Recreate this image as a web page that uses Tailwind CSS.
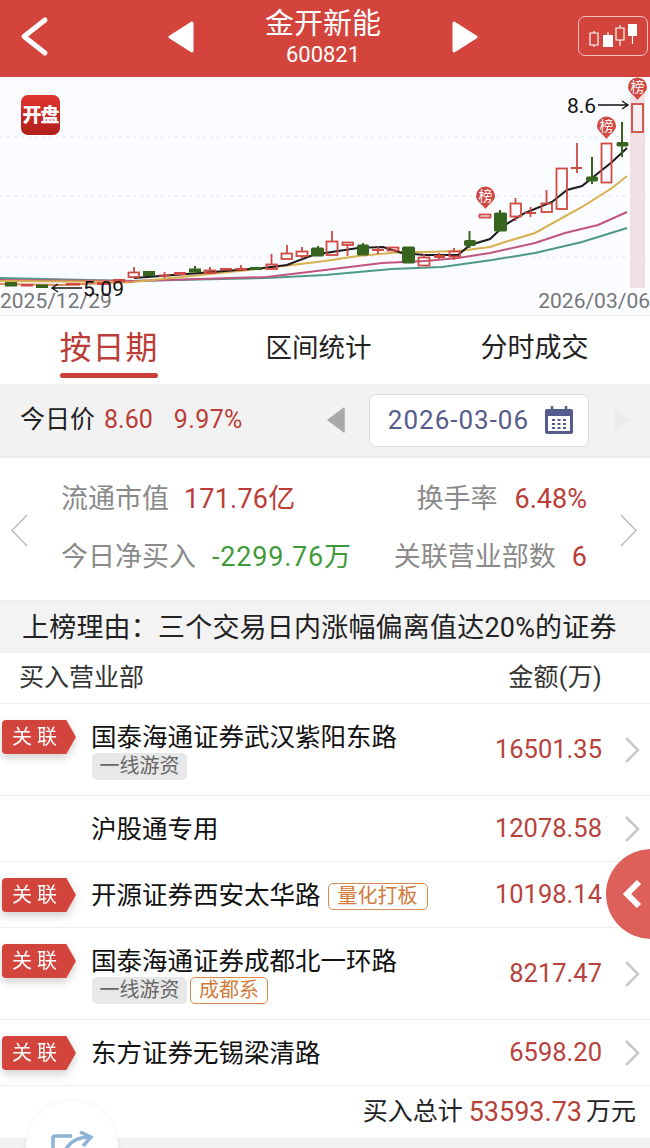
<!DOCTYPE html>
<html lang="zh-CN">
<head>
    <meta charset="UTF-8">
    <meta name="viewport" content="width=device-width, initial-scale=1.0">
    <title>金开新能</title>
    <script src="https://cdn.jsdelivr.net/npm/@tailwindcss/browser@4"></script>
</head>
<body class="bg-white font-['Roboto','Noto_Sans_CJK_SC',sans-serif]">
<div class="relative w-[650px] h-[1148px] overflow-hidden bg-white">
    <!-- header -->
    <header class="flex items-center h-[77px] bg-[#d3443c] text-white">
        <svg class="w-[60px] h-[77px] shrink-0" viewBox="0 0 60 77"><path d="M45 20 L24 36.500 L45 53" fill="none" stroke="#fff" stroke-width="5" stroke-linecap="round" stroke-linejoin="round"/></svg>
        <div class="flex flex-1 items-center gap-[71px] pl-[108px] mb-[3px]">
            <svg class="w-[26px] h-[32px]" viewBox="0 0 26 32"><path d="M24 2 L2 16 L24 30 Z" fill="#fff" stroke="#fff" stroke-width="3" stroke-linejoin="round"/></svg>
            <div class="flex flex-col items-center w-[116px]">
                <div class="text-[29px] leading-[36px] whitespace-nowrap">金开新能</div>
                <div class="text-[22px] leading-[26px]">600821</div>
            </div>
            <svg class="w-[26px] h-[32px]" viewBox="0 0 26 32"><path d="M2 2 L24 16 L2 30 Z" fill="#fff" stroke="#fff" stroke-width="3" stroke-linejoin="round"/></svg>
        </div>
        <div class="w-[70px] h-[40px] mr-[2px] mt-[-5px] rounded-[7px] border border-[#f2c4bf] flex items-center justify-center">
            <svg class="w-[50px] h-[28px] mt-[-1px]" viewBox="0 0 50 28">
                <path d="M2 11h8v12H2zM6 9v2M6 23v2" fill="none" stroke="#fff" stroke-width="1.200"/>
                <path d="M15 13h10v12H15z" fill="#fff"/><path d="M20 10v3" stroke="#fff" stroke-width="1.200"/>
                <path d="M28 6h8v12h-8zM32 3v3M32 18v6" fill="none" stroke="#fff" stroke-width="1.200"/>
                <path d="M40 2h9v12h-9z" fill="#fff"/><path d="M44.500 14v8" stroke="#fff" stroke-width="1.200"/>
            </svg>
        </div>
    </header>

    <!-- k-line chart -->
    <section class="relative h-[239px] bg-[#fbfcff] border-b border-[#eeeeee]">
        <svg class="block w-[650px] h-[238px]" viewBox="0 77 650 238">
            <path d="M0 137H650M0 196H650M0 257H650" stroke="#e4e6ea" stroke-width="1" stroke-dasharray="3 4"/>
            <rect x="630" y="90" width="15" height="198" fill="#f0dfe3"/>

            <!-- moving averages -->
            <polyline fill="none" stroke="#4e9a87" stroke-width="2" points="0,278 133,281 267,278 325,275 392,269 442,267 492,260 535,253 582,242 627,228"/>
            <polyline fill="none" stroke="#c0567e" stroke-width="2" points="0,280 133,281 267,277 325,270 382,263 425,261 458,258 490,253 535,243 565,233 598,225 627,212"/>
            <polyline fill="none" stroke="#d8b050" stroke-width="2" points="0,281 133,282 267,268 325,261 358,256 402,252 425,252 458,251 490,247 505,242 535,233 582,207 612,188 627,176"/>
            <polyline fill="none" stroke="#d98a5a" stroke-width="2" points="0,284 60,285 133,282"/>
            <polyline fill="none" stroke="#1c1c1c" stroke-width="2" points="134,278 213,272 263,268 287,265 313,255 325,253 358,248 383,247 402,253 425,255 458,255 470,245 490,239 505,225 525,213 552,202 567,190 582,186 612,162 627,148"/>

            <!-- green candles -->
            <g fill="#37651f" stroke="#37651f" stroke-width="1">
                <path d="M622 122V157M592 157V184M500 210V231M469.500 231V248M363 243V245M318 246V248M195 266V269" fill="none" stroke-width="2"/>
                <rect x="617" y="142.500" width="11" height="3.500" rx="1"/>
                <rect x="586.500" y="177" width="11" height="4" rx="1"/>
                <rect x="494.500" y="213" width="12" height="18" rx="1"/>
                <rect x="464.500" y="240.500" width="11" height="5" rx="1"/>
                <rect x="402.500" y="247" width="12" height="16" rx="1"/>
                <rect x="357.500" y="245" width="11" height="10" rx="1"/>
                <rect x="311.500" y="248" width="12" height="8" rx="1"/>
                <rect x="250.500" y="267.500" width="11" height="2"/>
                <rect x="189.500" y="269" width="11" height="3"/>
                <rect x="143.500" y="271.500" width="11" height="4"/>
                <rect x="36.500" y="285" width="11" height="2.500"/>
                <rect x="5.500" y="282.500" width="11" height="3.500"/>
            </g>

            <!-- red candles -->
            <g fill="none" stroke="#cf4a42" stroke-width="1.800">
                <rect x="632" y="104" width="11" height="28" fill="#f8eef0"/>
                <rect x="601.500" y="143.500" width="10" height="39"/>
                <rect x="556.500" y="168.500" width="10.500" height="40.500"/>
                <rect x="541.500" y="203.500" width="10.500" height="8.500"/>
                <rect x="510.500" y="203.500" width="10.500" height="13"/>
                <rect x="479.500" y="214.500" width="11" height="3"/>
                <rect x="449.500" y="251.500" width="10.500" height="5"/>
                <rect x="418.500" y="257.500" width="11" height="8"/>
                <rect x="387.500" y="247.500" width="11" height="3"/>
                <rect x="342.500" y="242.500" width="10.500" height="2.500"/>
                <rect x="326.500" y="241.500" width="11" height="13.500"/>
                <rect x="296.500" y="251.500" width="11" height="4.500"/>
                <rect x="281.500" y="253.500" width="10.500" height="5.500"/>
                <rect x="266.500" y="264.500" width="10.500" height="4.500"/>
                <rect x="204.500" y="270.500" width="11" height="2.500"/>
                <rect x="128.500" y="272.500" width="10.500" height="4.500"/>
                <path d="M577 143V173M571 168H582M546.500 190V203M530.500 207V217M525 213H536M515.500 198V203M515.500 217V221M454 248V251M454 257V260M439 253V259M424 254V257M378 247V254M372 250H384M347.500 245V256M332 231V241M302 247V251M302 256V259M287 245V253M271.500 254V264M241 265V268M210 267V270M164.500 272V278M159 275.500H170M134 267V272"/>
            </g>
            <g fill="#cf4a42">
                <rect x="434" y="255" width="11" height="3"/>
                <rect x="372" y="249" width="12" height="2"/>
                <rect x="235" y="268" width="12" height="2.500"/>
                <rect x="220" y="268" width="12" height="2.500"/>
                <rect x="174" y="272" width="12" height="3"/>
                <rect x="113" y="279" width="12" height="3"/>
                <rect x="97" y="282" width="12" height="3"/>
                <rect x="66" y="283" width="14" height="2.500"/>
                <rect x="21" y="284" width="12" height="2.500"/>
            </g>

            <!-- 榜 pins -->
            <g fill="#cf4a42">
                <path d="M476 196a9.500 9.500 0 1 1 19 0c0 5-6 8-9.500 13c-3.500-5-9.500-8-9.500-13z"/>
                <path d="M597 126a9.500 9.500 0 1 1 19 0c0 5-6 8-9.500 13c-3.500-5-9.500-8-9.500-13z"/>
                <path d="M628 87a9.500 9.500 0 1 1 19 0c0 5-6 8-9.500 13c-3.500-5-9.500-8-9.500-13z"/>
            </g>
            <g fill="#fff" font-size="14" text-anchor="middle">
                <text x="485.500" y="201">榜</text>
                <text x="606.500" y="131">榜</text>
                <text x="637.500" y="92">榜</text>
            </g>

            <!-- price marks -->
            <text x="567" y="113" font-size="21" fill="#111">8.6</text>
            <path d="M598 105H627M622 101L628 105L622 109" fill="none" stroke="#111" stroke-width="1.300"/>
            <path d="M82 288H53M58 284L52 288L58 292" fill="none" stroke="#111" stroke-width="1.300"/>
            <text x="0" y="308" font-size="21" fill="#777">2025/12/29</text>
            <text x="650" y="308" font-size="21" fill="#777" text-anchor="end">2026/03/06</text>
            <text x="83" y="296" font-size="21" fill="#111">5.09</text>
        </svg>
        <!-- 开盘 logo -->
        <div class="absolute left-[21px] top-[18px] w-[39px] h-[40px] rounded-[7px] bg-gradient-to-b from-[#e0342c] to-[#b01f1c] flex items-center justify-center text-white text-[19px] font-black leading-none tracking-[-1px] whitespace-nowrap">开盘</div>
    </section>

    <!-- tabs -->
    <nav class="grid grid-cols-[218px_201px_231px] h-[68px] bg-white">
        <div class="flex justify-center">
            <div class="flex flex-col items-center h-[62px] justify-between pt-[10px] w-[98px] text-[#bb3d37]">
                <span class="text-[32px] leading-[44px] whitespace-nowrap tracking-[1px]">按日期</span>
                <span class="w-[98px] h-[5px] rounded-full bg-[#cc3f38]"></span>
            </div>
        </div>
        <div class="flex justify-center pt-[12px] text-[26.500px] leading-[40px] text-[#222]"><span class="whitespace-nowrap">区间统计</span></div>
        <div class="flex justify-center pt-[12px] text-[27px] leading-[40px] text-[#222]"><span class="whitespace-nowrap">分时成交</span></div>
    </nav>

    <!-- date bar -->
    <div class="flex items-center h-[74px] bg-[#f2f2f2] border-b-[2px] border-[#ececec] pl-[20px]">
        <span class="text-[25px] text-[#222] whitespace-nowrap">今日价</span>
        <span class="text-[25px] text-[#bb3d37] ml-[9px]">8.60</span>
        <span class="text-[25px] text-[#bb3d37] ml-[21px] tracking-[0.4px]">9.97%</span>
        <svg class="ml-[83px] w-[20px] h-[28px]" viewBox="0 0 20 28"><path d="M18 2 L2 14 L18 26 Z" fill="#a9a9a9" stroke="#a9a9a9" stroke-width="1.500" stroke-linejoin="round"/></svg>
        <div class="ml-[23px] flex items-center w-[220px] h-[53px] rounded-[7px] bg-white border border-[#dcdcdc] pl-[18px]">
            <span class="text-[26px] tracking-[1px] text-[#555b8d] whitespace-nowrap">2026-03-06</span>
            <svg class="ml-[15px] w-[30px] h-[30px]" viewBox="0 0 30 30">
                <path d="M3 4h24a2 2 0 0 1 2 2v21a2 2 0 0 1-2 2H3a2 2 0 0 1-2-2V6a2 2 0 0 1 2-2z" fill="#555b8d"/>
                <path d="M8 1v6M22 1v6" stroke="#555b8d" stroke-width="2.500"/>
                <rect x="4" y="11" width="22" height="15" fill="#fff"/>
                <path d="M8 14h3v2H8zM13.500 14h3v2h-3zM19 14h3v2h-3zM8 18h3v2H8zM13.500 18h3v2h-3zM19 18h3v2h-3zM8 22h3v2H8zM13.500 22h3v2h-3zM19 22h3v2h-3z" fill="#555b8d"/>
            </svg>
        </div>
        <svg class="ml-[24px] w-[18px] h-[26px]" viewBox="0 0 18 26"><path d="M2 2 L16 13 L2 24 Z" fill="#ebebeb"/></svg>
    </div>

    <!-- stats -->
    <section class="relative h-[145px] bg-white border-b-[3px] border-[#eeeeee] pt-[16px]">
        <div class="flex items-center h-[51px] text-[27px] whitespace-nowrap">
            <span class="ml-[61px] text-[#8a8a8a]">流通市值</span>
            <span class="ml-[15px] text-[#bb3d37] tracking-[0.2px]">171.76亿</span>
            <span class="ml-auto text-[#8a8a8a]">换手率</span>
            <span class="ml-[17px] mr-[63px] text-[#bb3d37]">6.48%</span>
        </div>
        <div class="flex items-center h-[65px] text-[27px] whitespace-nowrap">
            <span class="ml-[61px] text-[#8a8a8a]">今日净买入</span>
            <span class="ml-[16px] text-[#3f9a3a] tracking-[0.8px]">-2299.76万</span>
            <span class="ml-auto text-[#8a8a8a]">关联营业部数</span>
            <span class="ml-[16px] mr-[63px] text-[#bb3d37]">6</span>
        </div>
        <svg class="absolute left-[10px] top-[56px] w-[19px] h-[33px]" viewBox="0 0 19 33"><path d="M17 1L2 16.500L17 32" fill="none" stroke="#bdbdbd" stroke-width="1.500"/></svg>
        <svg class="absolute right-[12px] top-[56px] w-[19px] h-[33px]" viewBox="0 0 19 33"><path d="M2 1L17 16.500L2 32" fill="none" stroke="#bdbdbd" stroke-width="1.500"/></svg>
    </section>

    <!-- reason -->
    <div class="flex items-center h-[50px] bg-[#f3f3f3] pl-[22px] text-[27px] tracking-[0.2px] text-[#222] whitespace-nowrap">上榜理由：三个交易日内涨幅偏离值达20%的证券</div>

    <!-- table -->
    <div class="flex items-center justify-between h-[51px] pl-[19px] pr-[48px] border-b border-[#eeeeee] text-[25px] text-[#333]">
        <span>买入营业部</span><span class="tracking-[0.3px]">金额(万)</span>
    </div>

    <div class="flex h-[92px] border-b border-[#eeeeee]">
        <div class="w-[92px] pt-[16px] pl-[2px] shrink-0">
            <div class="drop-shadow-[0_4px_4px_rgba(0,0,0,0.18)]"><div class="w-[74px] h-[34px] rounded-l-[4px] bg-[#d3443c] [clip-path:polygon(0_0,87%_0,100%_50%,87%_100%,0_100%)] flex items-center pl-[10px] text-white text-[20px] tracking-[5px] whitespace-nowrap">关联</div></div>
        </div>
        <div class="flex-1 pt-[16px]">
            <div class="h-[33px] leading-[34px] text-[25.500px] -ml-[1px] text-[#111] whitespace-nowrap">国泰海通证券武汉紫阳东路</div>
            <div class="flex gap-[3px]"><span class="w-[95px] h-[27px] leading-[26px] text-center rounded-[5px] bg-[#e8e8e8] text-[#666] text-[20px]">一线游资</span></div>
        </div>
        <div class="flex items-center text-[25.500px] text-[#b8423c]">16501.35</div>
        <div class="flex items-center w-[48px] justify-end pr-[9px]"><svg class="w-[17px] h-[28px]" viewBox="0 0 17 28"><path d="M2 2L14 14L2 26" fill="none" stroke="#c8c8c8" stroke-width="2.500"/></svg></div>
    </div>

    <div class="flex h-[66px] border-b border-[#eeeeee]">
        <div class="w-[92px] shrink-0"></div>
        <div class="flex-1 pt-[16px]">
            <div class="h-[33px] leading-[34px] text-[25.500px] -ml-[1px] text-[#111] whitespace-nowrap">沪股通专用</div>
        </div>
        <div class="flex items-center text-[25.500px] text-[#b8423c]">12078.58</div>
        <div class="flex items-center w-[48px] justify-end pr-[9px]"><svg class="w-[17px] h-[28px]" viewBox="0 0 17 28"><path d="M2 2L14 14L2 26" fill="none" stroke="#c8c8c8" stroke-width="2.500"/></svg></div>
    </div>

    <div class="flex h-[66px] border-b border-[#eeeeee]">
        <div class="w-[92px] pt-[16px] pl-[2px] shrink-0">
            <div class="drop-shadow-[0_4px_4px_rgba(0,0,0,0.18)]"><div class="w-[74px] h-[34px] rounded-l-[4px] bg-[#d3443c] [clip-path:polygon(0_0,87%_0,100%_50%,87%_100%,0_100%)] flex items-center pl-[10px] text-white text-[20px] tracking-[5px] whitespace-nowrap">关联</div></div>
        </div>
        <div class="flex-1 pt-[16px] flex items-start">
            <div class="h-[33px] leading-[34px] text-[25.500px] -ml-[1px] text-[#111] whitespace-nowrap">开源证券西安太华路</div>
            <span class="ml-[7px] mt-[5px] w-[100px] h-[27px] leading-[24px] text-center rounded-[5px] border-[1.500px] border-[#d98a50] bg-white text-[#d07a3c] text-[20px] whitespace-nowrap">量化打板</span>
        </div>
        <div class="flex items-center text-[25.500px] text-[#b8423c]">10198.14</div>
        <div class="w-[48px]"></div>
    </div>

    <div class="flex h-[92px] border-b border-[#eeeeee]">
        <div class="w-[92px] pt-[16px] pl-[2px] shrink-0">
            <div class="drop-shadow-[0_4px_4px_rgba(0,0,0,0.18)]"><div class="w-[74px] h-[34px] rounded-l-[4px] bg-[#d3443c] [clip-path:polygon(0_0,87%_0,100%_50%,87%_100%,0_100%)] flex items-center pl-[10px] text-white text-[20px] tracking-[5px] whitespace-nowrap">关联</div></div>
        </div>
        <div class="flex-1 pt-[16px]">
            <div class="h-[33px] leading-[34px] text-[25.500px] -ml-[1px] text-[#111] whitespace-nowrap">国泰海通证券成都北一环路</div>
            <div class="flex gap-[3px]">
                <span class="w-[95px] h-[27px] leading-[26px] text-center rounded-[5px] bg-[#e8e8e8] text-[#666] text-[20px]">一线游资</span>
                <span class="w-[78px] h-[27px] leading-[24px] text-center rounded-[5px] border-[1.500px] border-[#d98a50] bg-white text-[#d07a3c] text-[20px]">成都系</span>
            </div>
        </div>
        <div class="flex items-center text-[25.500px] text-[#b8423c]">8217.47</div>
        <div class="flex items-center w-[48px] justify-end pr-[9px]"><svg class="w-[17px] h-[28px]" viewBox="0 0 17 28"><path d="M2 2L14 14L2 26" fill="none" stroke="#c8c8c8" stroke-width="2.500"/></svg></div>
    </div>

    <div class="flex h-[66px] border-b border-[#eeeeee]">
        <div class="w-[92px] pt-[16px] pl-[2px] shrink-0">
            <div class="drop-shadow-[0_4px_4px_rgba(0,0,0,0.18)]"><div class="w-[74px] h-[34px] rounded-l-[4px] bg-[#d3443c] [clip-path:polygon(0_0,87%_0,100%_50%,87%_100%,0_100%)] flex items-center pl-[10px] text-white text-[20px] tracking-[5px] whitespace-nowrap">关联</div></div>
        </div>
        <div class="flex-1 pt-[16px]">
            <div class="h-[33px] leading-[34px] text-[25.500px] -ml-[1px] text-[#111] whitespace-nowrap">东方证券无锡梁清路</div>
        </div>
        <div class="flex items-center text-[25.500px] text-[#b8423c]">6598.20</div>
        <div class="flex items-center w-[48px] justify-end pr-[9px]"><svg class="w-[17px] h-[28px]" viewBox="0 0 17 28"><path d="M2 2L14 14L2 26" fill="none" stroke="#c8c8c8" stroke-width="2.500"/></svg></div>
    </div>

    <div class="flex items-center justify-end h-[52px] pr-[14px] text-[25px] text-[#222] whitespace-nowrap">
        买入总计<span class="ml-[6px] text-[27px] text-[#b8423c]">53593.73</span><span class="ml-[4px]">万元</span>
    </div>
    <div class="h-[12px] bg-[#f2f2f2]"></div>

    <!-- floating buttons -->
    <div class="absolute left-[606px] top-[849px] w-[90px] h-[90px] rounded-full bg-[#de605b] pl-[16px] flex items-center">
        <svg class="w-[22px] h-[30px]" viewBox="0 0 22 30"><path d="M17 3L5 15L17 27" fill="none" stroke="#fff" stroke-width="6"/></svg>
    </div>
    <div class="absolute left-[26px] top-[1101px] w-[92px] h-[92px] rounded-full bg-white shadow-[0_0_6px_rgba(0,0,0,0.06)] flex justify-center pt-[30px]">
        <svg class="w-[44px] h-[30px]" viewBox="0 0 44 30"><path d="M22 5H5a2 2 0 0 0-2 2V30M14 22C18 12 26 6 40 6M30 1L41 6L33 15" fill="none" stroke="#8db4d6" stroke-width="3.500"/></svg>
    </div>
</div>
</body>
</html>
